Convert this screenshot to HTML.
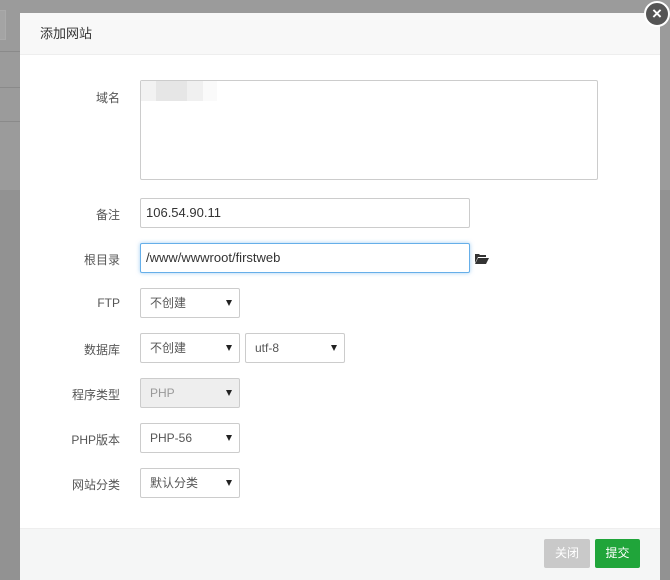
<!DOCTYPE html>
<html><head><meta charset="utf-8"><style>
body{margin:0;width:670px;height:579px;background:#929292;position:relative;overflow:hidden;font-family:"Liberation Sans","Noto Sans CJK SC",sans-serif;font-size:12px;color:#555}
.bgtop{position:absolute;left:0;top:0;width:670px;height:190px;background:#9b9b9b}
.bgl{position:absolute;left:0;width:20px;height:1px;background:#8a8a8a}
.modal{position:absolute;left:20px;top:13px;width:640px;height:566px;background:#fff}
.hd{height:41px;background:#f8f8f8;border-bottom:1px solid #eee;line-height:41px;padding-left:20px;font-size:13px;color:#333}
.lbl{position:absolute;right:540px;width:100px;text-align:right;color:#555}
.f{position:absolute;left:120px;border:1px solid #ccc;box-sizing:border-box;background:#fff;border-radius:2px;color:#555;padding-left:9px;font-size:12px}
.sel:after{content:"";position:absolute;right:7px;top:11px;border:3px solid transparent;border-top:6px solid #222;border-bottom:0}
.inp{padding-left:5px;font-size:13px;color:#333}
.ft{position:absolute;left:0;top:515px;width:640px;height:51px;background:#f5f6f6;border-top:1px solid #eee}
.btn{position:absolute;top:10px;height:29px;line-height:29px;color:#fff;text-align:center;border-radius:2px;font-size:12px}
.x{position:absolute;left:644px;top:1px;width:26px;height:26px;border-radius:50%;background:#555;border:2px solid #fff;box-sizing:border-box;color:#fff;text-align:center;line-height:21px;font-size:17px;font-weight:bold}
</style></head><body>
<div class="bgtop"></div>
<div style="position:absolute;left:0;top:10px;width:5px;height:28px;border:1px solid #aaa;border-left:0;background:#a4a4a4"></div>
<div class="bgl" style="top:51px"></div><div class="bgl" style="top:87px"></div><div class="bgl" style="top:121px"></div>
<div class="modal">
<div class="hd">添加网站</div>
<div class="lbl" style="top:76px">域名</div>
<div class="f" style="top:67px;width:458px;height:100px;border-color:#ccc"><div style="position:absolute;left:0;top:0;width:76px;height:20px;background:linear-gradient(90deg,#f2f2f2 0 15px,#e6e6e6 15px 46px,#f0f0f0 46px 62px,#fafafa 62px)"></div></div>
<div class="lbl" style="top:193px">备注</div>
<div class="f inp" style="top:185px;width:330px;height:30px;line-height:28px">106.54.90.11</div>
<div class="lbl" style="top:238px">根目录</div>
<div class="f inp" style="top:230px;width:330px;height:30px;line-height:28px;border-color:#66afe9;box-shadow:0 0 4px rgba(102,175,233,.6)">/www/wwwroot/firstweb</div>
<svg style="position:absolute;left:454px;top:240px" width="16" height="12" viewBox="0 0 16 12"><path d="M1 1h4l1 1h6v2H4L1 10z" fill="#333"/><path d="M4 5h11l-3 6H1z" fill="#333"/></svg>
<div class="lbl" style="top:283px">FTP</div>
<div class="f sel" style="top:275px;width:100px;height:30px;line-height:28px">不创建</div>
<div class="lbl" style="top:328px">数据库</div>
<div class="f sel" style="top:320px;width:100px;height:30px;line-height:28px">不创建</div>
<div class="f sel" style="left:225px;top:320px;width:100px;height:30px;line-height:28px">utf-8</div>
<div class="lbl" style="top:373px">程序类型</div>
<div class="f sel" style="top:365px;width:100px;height:30px;line-height:28px;background:#eee;color:#999">PHP</div>
<div class="lbl" style="top:418px">PHP版本</div>
<div class="f sel" style="top:410px;width:100px;height:30px;line-height:28px">PHP-56</div>
<div class="lbl" style="top:463px">网站分类</div>
<div class="f sel" style="top:455px;width:100px;height:30px;line-height:28px">默认分类</div>
<div class="ft">
<div class="btn" style="left:524px;width:46px;background:#c9c9c9">关闭</div>
<div class="btn" style="left:575px;width:45px;background:#20a53a">提交</div>
</div>
</div>
<div class="x">×</div>
</body></html>
